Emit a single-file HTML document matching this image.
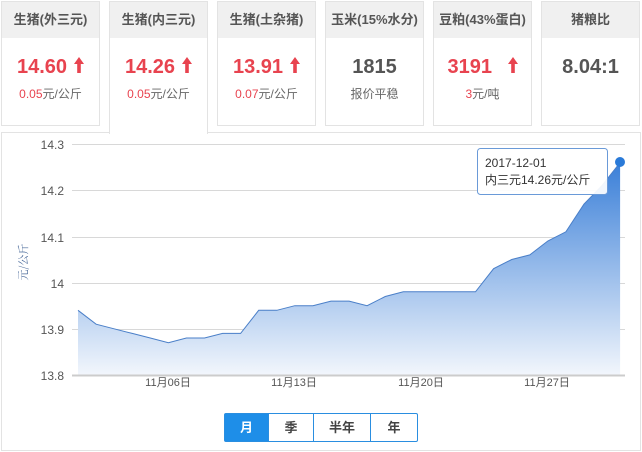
<!DOCTYPE html>
<html><head><meta charset="utf-8"><style>
*{margin:0;padding:0;box-sizing:border-box}
body{width:642px;height:452px;background:#fff;font-family:"Liberation Sans","Noto Sans CJK SC",sans-serif;position:relative;overflow:hidden}
.card{position:absolute;top:1px;width:99px;height:125px;border:1px solid #e3e3e3;background:#fff}
.card .h{height:36px;background:#f0f0f0;text-align:center;line-height:36px;font-size:13px;font-weight:bold;color:#555}
.card .v{text-align:center;font-size:20px;font-weight:bold;margin-top:18px;color:#555}
.card .v.red,.red{color:#e8434f}
.card .s{text-align:center;font-size:12px;color:#666;margin-top:6px}
.active{height:133px;border-bottom:none;z-index:2}
.panel{position:absolute;left:1px;top:132px;width:640px;height:319px;border:1px solid #e3e3e3;background:#fff}
.btns{position:absolute;left:224px;top:413px;height:29px;display:flex;border:1px solid #2a8ee0;border-radius:2px;font-size:13px;font-weight:bold;color:#444}
.btns div{text-align:center;line-height:27px;border-left:1px solid #2a8ee0}
.ar{display:inline-block;vertical-align:0px;margin-left:7px}
</style></head><body>
<div class="panel"></div>
<div class="card" style="left:1px"><div class="h">生猪(外三元)</div><div class="v red">14.60<svg class="ar" width="10" height="16" viewBox="0 0 10 16"><path d="M5 0L10 7H6.8V16H3.2V7H0Z" fill="#e8434f"/></svg></div><div class="s"><span class="red">0.05</span>元/公斤</div></div>
<div class="card active" style="left:109px"><div class="h">生猪(内三元)</div><div class="v red">14.26<svg class="ar" width="10" height="16" viewBox="0 0 10 16"><path d="M5 0L10 7H6.8V16H3.2V7H0Z" fill="#e8434f"/></svg></div><div class="s"><span class="red">0.05</span>元/公斤</div></div>
<div class="card" style="left:217px"><div class="h">生猪(土杂猪)</div><div class="v red">13.91<svg class="ar" width="10" height="16" viewBox="0 0 10 16"><path d="M5 0L10 7H6.8V16H3.2V7H0Z" fill="#e8434f"/></svg></div><div class="s"><span class="red">0.07</span>元/公斤</div></div>
<div class="card" style="left:325px"><div class="h">玉米(15%水分)</div><div class="v">1815</div><div class="s">报价平稳</div></div>
<div class="card" style="left:433px"><div class="h">豆粕(43%蛋白)</div><div class="v red">3191 <svg class="ar" style="margin-left:10px" width="10" height="16" viewBox="0 0 10 16"><path d="M5 0L10 7H6.8V16H3.2V7H0Z" fill="#e8434f"/></svg></div><div class="s"><span class="red">3</span>元/吨</div></div>
<div class="card" style="left:541px"><div class="h">猪粮比</div><div class="v">8.04:1</div></div>
<svg style="position:absolute;left:0;top:0;z-index:3" width="642" height="452">
<defs><linearGradient id="g" x1="0" x2="0" y1="162" y2="375" gradientUnits="userSpaceOnUse"><stop offset="0" stop-color="#3a7fd8"/><stop offset="1" stop-color="#f2f6fc"/></linearGradient></defs>
<g stroke="#d8d8d8" stroke-width="1">
<line x1="72" y1="144.5" x2="625" y2="144.5"/><line x1="72" y1="190.5" x2="625" y2="190.5"/><line x1="72" y1="237.5" x2="625" y2="237.5"/><line x1="72" y1="283.5" x2="625" y2="283.5"/><line x1="72" y1="329.5" x2="625" y2="329.5"/>
</g>
<polygon fill="url(#g)" points="78,375 78,310.3 96.1,324.2 114.1,328.8 132.2,333.4 150.3,338 168.4,342.7 186.4,338 204.5,338 222.6,333.4 240.6,333.4 258.7,310.3 276.8,310.3 294.8,305.7 312.9,305.7 331,301.1 349.1,301.1 367.1,305.7 385.2,296.5 403.3,291.8 421.3,291.8 439.4,291.8 457.5,291.8 475.5,291.8 493.6,268.7 511.7,259.5 529.8,254.9 547.8,241 565.9,231.8 584,204.1 602,185.6 620.1,162.5 620.1,375"/>
<polyline fill="none" stroke="#4a7fc8" stroke-width="1" points="78,310.3 96.1,324.2 114.1,328.8 132.2,333.4 150.3,338 168.4,342.7 186.4,338 204.5,338 222.6,333.4 240.6,333.4 258.7,310.3 276.8,310.3 294.8,305.7 312.9,305.7 331,301.1 349.1,301.1 367.1,305.7 385.2,296.5 403.3,291.8 421.3,291.8 439.4,291.8 457.5,291.8 475.5,291.8 493.6,268.7 511.7,259.5 529.8,254.9 547.8,241 565.9,231.8 584,204.1 602,185.6 620.1,162.5"/>
<line x1="72" y1="375.5" x2="625" y2="375.5" stroke="#ccc" stroke-width="2"/>
<circle cx="620" cy="162" r="5" fill="#2a7ad8"/>
<g font-size="12" fill="#555" text-anchor="end" font-family="Liberation Sans,sans-serif">
<text x="64" y="149">14.3</text><text x="64" y="195">14.2</text><text x="64" y="242">14.1</text><text x="64" y="288">14</text><text x="64" y="334">13.9</text><text x="64" y="380">13.8</text></g>
<g font-size="11" fill="#555" text-anchor="middle" font-family="Liberation Sans,Noto Sans CJK SC,sans-serif">
<text x="168" y="386">11月06日</text><text x="294" y="386">11月13日</text><text x="421" y="386">11月20日</text><text x="547" y="386">11月27日</text></g>
<text transform="translate(27,262) rotate(-90)" text-anchor="middle" font-size="11" fill="#4a6a9a" font-family="Noto Serif CJK SC,serif">元/公斤</text>
<rect x="477.5" y="148.5" width="130" height="46" rx="3" fill="#fff" fill-opacity="0.92" stroke="#6a9ad8"/>
<text x="485" y="167" font-size="12" fill="#333" font-family="Liberation Sans,Noto Sans CJK SC,sans-serif">2017-12-01</text>
<text x="485" y="184" font-size="12" fill="#333" font-family="Liberation Sans,Noto Sans CJK SC,sans-serif">内三元14.26元/公斤</text>
</svg>
<div class="btns"><div style="width:43px;background:#1e8ee8;color:#fff;border-left:none">月</div><div style="width:45px">季</div><div style="width:57px">半年</div><div style="width:47px">年</div></div>
</body></html>
